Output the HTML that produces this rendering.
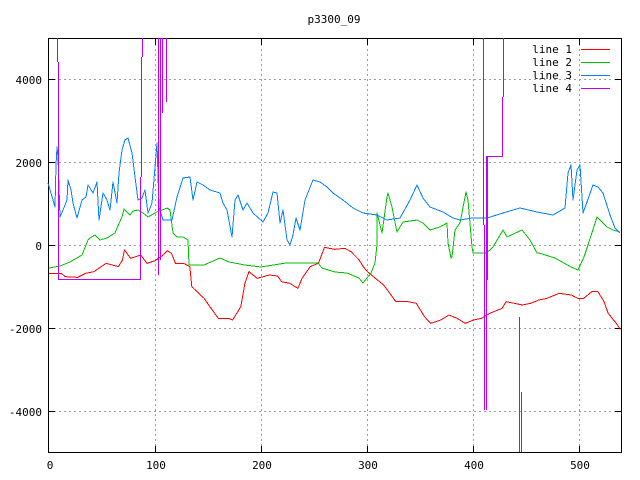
<!DOCTYPE html>
<html><head><style>
html,body{margin:0;padding:0;background:#fff;}
svg{display:block}
text{font-family:"DejaVu Sans Mono","Liberation Mono",monospace;font-size:11px;fill:#000}
</style></head><body>
<svg width="640" height="480" viewBox="0 0 640 480" xmlns="http://www.w3.org/2000/svg" shape-rendering="crispEdges">
<rect width="640" height="480" fill="#fff"/>
<g stroke="#a0a0a0" stroke-width="1" stroke-dasharray="2,3" fill="none">
<path d="M155.5,39V452M261.5,39V452M367.5,39V452M473.5,39V452M579.5,39V452"/>
<path d="M49,79.5H621M49,162.5H621M49,245.5H621M49,328.5H621M49,411.5H621"/>
</g>
<g stroke="#000" stroke-width="1" fill="none">
<rect x="48.5" y="38.5" width="573" height="414"/>
<path d="M155.5,452v-6M261.5,452v-6M367.5,452v-6M473.5,452v-6M579.5,452v-6M155.5,39v6M261.5,39v6M367.5,39v6M473.5,39v6M579.5,39v6"/>
<path d="M49,79.5h6M49,162.5h6M49,245.5h6M49,328.5h6M49,411.5h6M621,79.5h-6M621,162.5h-6M621,245.5h-6M621,328.5h-6M621,411.5h-6"/>
</g>
<text x="334" y="23" text-anchor="middle">p3300_09</text>
<g text-anchor="end">
<text x="42" y="84">4000</text><text x="42" y="167">2000</text><text x="42" y="250">0</text>
<text x="42" y="333">-2000</text><text x="42" y="416">-4000</text>
</g>
<g text-anchor="middle">
<text x="50" y="469">0</text><text x="156" y="469">100</text><text x="262" y="469">200</text>
<text x="368" y="469">300</text><text x="474" y="469">400</text><text x="580" y="469">500</text>
</g>
<g text-anchor="end">
<text x="572" y="53">line 1</text><text x="572" y="66">line 2</text>
<text x="572" y="79">line 3</text><text x="572" y="92">line 4</text>
</g>
<rect x="581" y="49" width="29" height="1" fill="#ff0000"/>
<rect x="581" y="62" width="29" height="1" fill="#00c000"/>
<rect x="581" y="75" width="29" height="1" fill="#0080ff"/>
<rect x="581" y="88" width="29" height="1" fill="#c000ff"/>
<g fill="none" stroke-width="1" stroke-linejoin="round">
<polyline stroke="#ff0000" transform="translate(0,240) scale(0.40816,0.33333)" style="vector-effect:non-scaling-stroke" points="120,100 150,100 160,110 190,112 210,100 230,95 260,70 290,80 300,60 305,30 320,55 345,45 360,70 380,62 400,45 410,32 420,40 430,70 450,70 465,80 470,140 500,175 520,210 535,235 560,235 570,240 590,200 600,130 610,95 630,115 660,105 680,108 690,125 710,130 730,145 740,115 760,80 780,70 795,22 820,28 845,25 860,35 880,60 890,80 900,95 940,135 970,185 1000,185 1020,190 1040,230 1055,250 1080,240 1100,225 1120,235 1140,250 1160,240 1180,235 1200,220 1230,205 1240,185 1280,195 1300,190 1320,180 1340,175 1370,160 1400,165 1415,175 1430,175 1450,155 1465,155 1480,185 1490,220 1510,250 1520,268"/>
<polyline stroke="#00c000" points="49,268 60,266 70,262 82,255 88,240 90,238 95,235 100,240 107,238 115,233 117,228 122,217 124,209 130,215 133,211 138,210 143,213 148,217 157,212 167,208 170,210 173,233 177,237 183,237 188,240 189,265 204,265 220,258 229,262 245,265 261,267 286,263 306,263 318,263 322,268 335,272 347,273 359,278 363,283 371,273 375,263 377,245 377,213 382,233 387,197 388,193 392,207 397,232 403,222 417,220 423,223 430,230 440,227 447,223 448,243 451,258 452,257 455,230 460,223 466,192 468,200 472,247 473,253 486,253 490,250 493,247 503,230 507,237 522,230 530,240 537,253 539,253 555,258 571,267 578,270 584,257 588,245 597,217 607,227 613,230 620,232"/>
<polyline stroke="#0080ff" points="48,183 53,200 55,207 56,165 57,147 58,157 60,217 63,210 67,200 68,180 71,190 73,203 77,218 82,200 86,197 88,185 93,193 97,182 99,220 103,193 107,200 110,210 113,182 117,203 119,173 122,150 125,140 128,138 132,153 135,177 138,200 142,198 145,190 148,213 152,203 155,167 157,143 159,207 163,220 172,220 177,197 183,178 190,177 193,200 197,182 203,185 210,190 220,193 223,203 227,210 232,237 235,200 238,195 243,210 247,203 253,213 263,222 268,213 273,192 277,193 280,223 283,210 287,240 290,245 293,235 296,218 300,230 305,200 313,180 320,182 327,187 333,193 343,200 353,208 363,213 377,215 387,220 400,218 410,200 417,185 423,198 430,207 443,212 453,218 460,220 472,218 487,218 503,213 520,208 537,212 553,215 565,208 568,173 571,165 573,200 577,170 580,165 583,213 587,202 593,185 598,187 603,193 610,215 615,228 620,233"/>
<path stroke="#c000ff" d="M57.5,38V62M58.5,62V279.5H140.5V177M141.5,177V57M142.5,57V38M158.5,38V275M160.5,38V260M162.5,38V113M166.5,38V102M483.5,38V225M484.5,225V410M486.5,410V156.5H502.5V97M503.5,97V38M487.5,156V280M519.5,317V452M521.5,392V452"/>
</g>
</svg>
</body></html>
